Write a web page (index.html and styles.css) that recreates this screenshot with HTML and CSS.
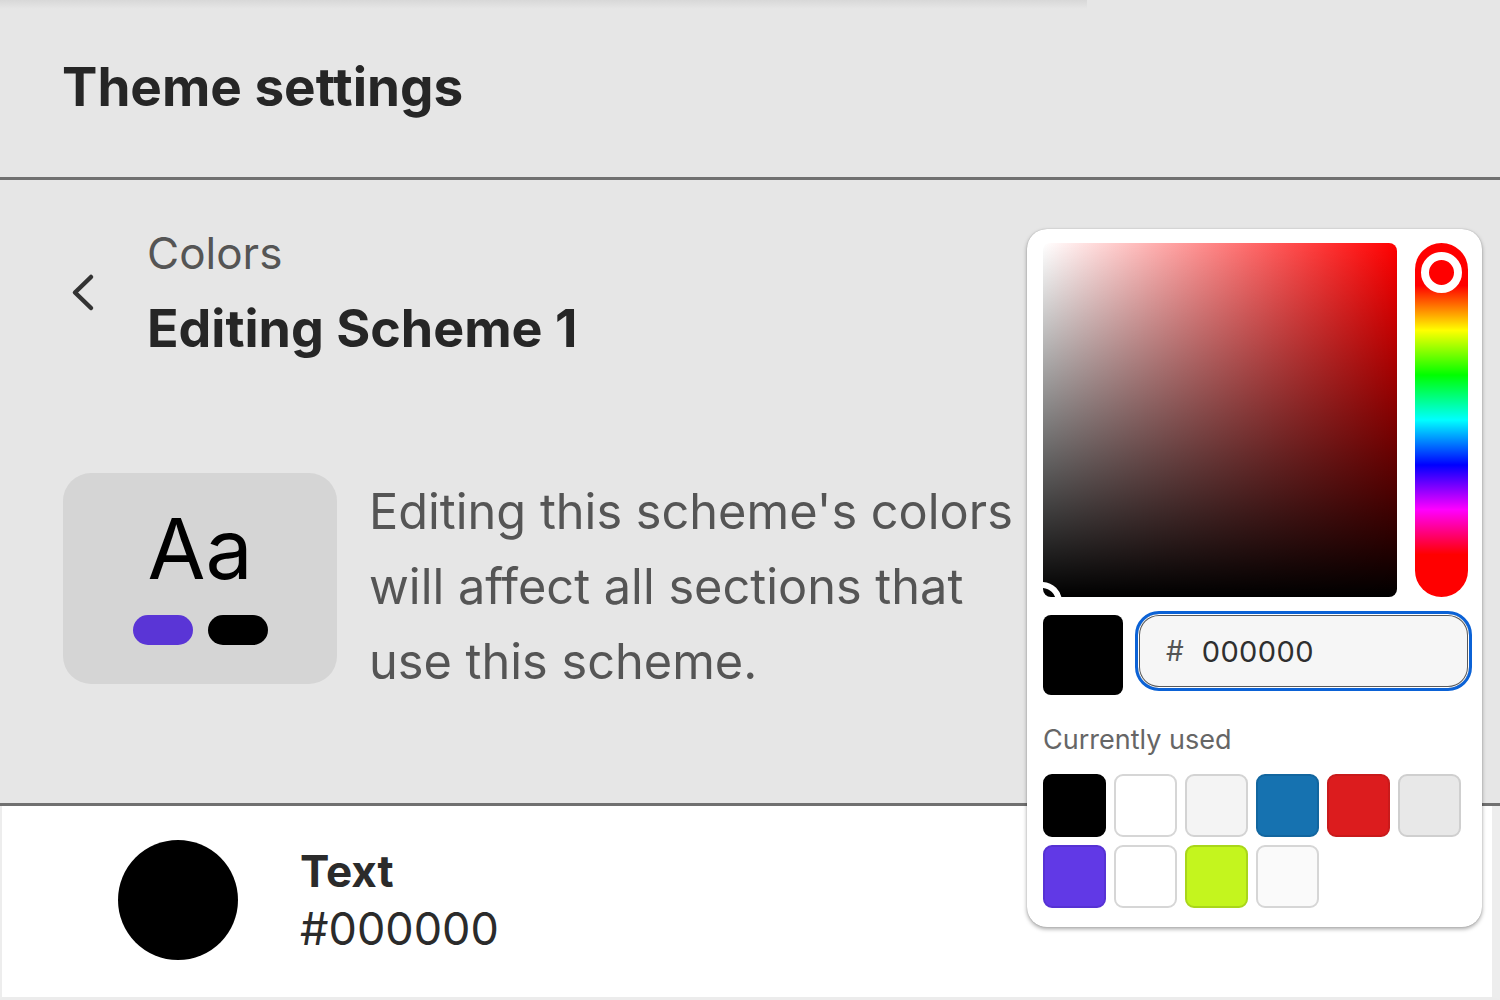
FILE: index.html
```html
<!DOCTYPE html>
<html lang="en">
<head>
<meta charset="utf-8">
<title>Theme settings</title>
<link rel="stylesheet" href="styles.css">
</head>
<body>
<div class="page">
  <div class="top-shade"></div>
  <header class="top">
    <h1 class="top-title">Theme settings</h1>
  </header>

  <section class="main">
    <div class="nav">
      <button class="back" aria-label="Back">
        <svg width="30" height="40" viewBox="0 0 30 40"><path d="M20 5 L4 20.5 L20 36" fill="none" stroke="#333" stroke-width="4.5" stroke-linecap="round" stroke-linejoin="round"/></svg>
      </button>
      <div class="nav-titles">
        <div class="nav-parent">Colors</div>
        <div class="nav-current">Editing Scheme 1</div>
      </div>
    </div>

    <div class="scheme">
      <div class="preview">
        <div class="preview-aa">Aa</div>
        <div class="preview-pills">
          <span class="pill pill-primary"></span>
          <span class="pill pill-secondary"></span>
        </div>
      </div>
      <p class="scheme-desc">Editing this scheme's colors will affect all sections that use this scheme.</p>
    </div>
  </section>

  <section class="color-row">
    <span class="color-dot"></span>
    <div class="color-info">
      <div class="color-name">Text</div>
      <div class="color-value">#000000</div>
    </div>
  </section>

  <div class="picker">
    <div class="picker-top">
      <div class="sv">
        <span class="sv-knob"></span>
      </div>
      <div class="hue">
        <span class="hue-knob"></span>
      </div>
    </div>
    <div class="picker-mid">
      <span class="current-swatch"></span>
      <label class="hex-field">
        <span class="hex-hash">#</span>
        <span class="hex-value">000000</span>
      </label>
    </div>
    <div class="used-label">Currently used</div>
    <div class="swatches">
      <span class="sw sw-black"></span>
      <span class="sw sw-white"></span>
      <span class="sw sw-light"></span>
      <span class="sw sw-blue"></span>
      <span class="sw sw-red"></span>
      <span class="sw sw-gray"></span>
      <span class="sw sw-purple"></span>
      <span class="sw sw-white"></span>
      <span class="sw sw-lime"></span>
      <span class="sw sw-offwhite"></span>
    </div>
  </div>
</div>
</body>
</html>
```

FILE: styles.css
```css
* { box-sizing: border-box; }
html, body { margin: 0; padding: 0; }
body {
  width: 1500px;
  height: 1000px;
  overflow: hidden;
  background: #e6e6e6;
  font-family: Inter, "Noto Sans", "Liberation Sans", sans-serif;
  color: #262626;
}
.page {
  position: relative;
  width: 1500px;
  height: 1000px;
  display: flex;
  flex-direction: column;
}
.top-shade {
  position: absolute;
  left: 0;
  top: 0;
  width: 1087px;
  height: 9px;
  background: linear-gradient(to bottom, #d8d8d8, #e6e6e6);
}
.top {
  height: 180px;
  border-bottom: 3px solid #707070;
  display: flex;
  align-items: center;
  padding-left: 62px;
}
.top-title {
  margin: 0;
  font-size: 53px;
  font-weight: 700;
  line-height: 1.2;
  color: #262626;
  padding-bottom: 1px;
}
.main {
  height: 626px;
  border-bottom: 3px solid #707070;
  padding: 42px 0 0 0;
}
.nav {
  display: flex;
  align-items: center;
}
.back {
  border: 0;
  background: none;
  padding: 0;
  margin: 0 0 6px 71px;
  width: 76px;
  height: 40px;
  display: flex;
  align-items: center;
  justify-content: flex-start;
}
.nav-titles {
  display: flex;
  flex-direction: column;
}
.nav-parent {
  font-size: 44px;
  line-height: 62px;
  color: #555;
}
.nav-current {
  margin-top: 7px;
  font-size: 52px;
  line-height: 76px;
  font-weight: 700;
  color: #262626;
}
.scheme {
  display: flex;
  align-items: flex-start;
  margin-top: 106px;
  padding-left: 63px;
}
.preview {
  flex-shrink: 0;
  width: 274px;
  height: 211px;
  border-radius: 28px;
  background: #d5d5d5;
  display: flex;
  flex-direction: column;
  align-items: center;
  padding-top: 26px;
}
.preview-aa {
  font-size: 84px;
  line-height: 100px;
  color: #000;
}
.preview-pills {
  display: flex;
  gap: 15px;
  margin-top: 16px;
}
.pill {
  width: 60px;
  height: 30px;
  border-radius: 15px;
  display: block;
}
.pill-primary { background: #5a35d6; }
.pill-secondary { background: #000; }
.scheme-desc {
  margin: 1px 0 0 32px;
  width: 652px;
  font-size: 48.7px;
  line-height: 75px;
  color: #555;
}
.color-row {
  flex: 1;
  background: #fff;
  border-left: 2px solid #ededed;
  border-right: 8px solid #ededed;
  border-bottom: 3px solid #ececec;
  display: flex;
  align-items: center;
  padding-left: 116px;
  padding-bottom: 4px;
}
.color-dot {
  width: 120px;
  height: 120px;
  border-radius: 50%;
  background: #000;
  display: block;
  flex-shrink: 0;
}
.color-info {
  margin-left: 62px;
  display: flex;
  flex-direction: column;
}
.color-name {
  font-size: 44px;
  font-weight: 700;
  line-height: 58px;
  color: #2b2b2b;
}
.color-value {
  font-size: 45px;
  line-height: 58px;
  color: #2b2b2b;
}
.picker {
  position: absolute;
  left: 1027px;
  top: 229px;
  width: 455px;
  height: 698px;
  background: #fff;
  border-radius: 20px;
  box-shadow: 0 2px 4px rgba(0,0,0,0.35), 0 0 1px rgba(0,0,0,0.3);
  padding: 14px 10px 0 16px;
}
.picker-top {
  display: flex;
  gap: 18px;
}
.sv {
  position: relative;
  flex-shrink: 0;
  width: 354px;
  height: 354px;
  border-radius: 8px;
  overflow: hidden;
  background:
    linear-gradient(to top, #000, rgba(0,0,0,0)),
    linear-gradient(to right, #fff, #ff0000);
}
.sv-knob {
  position: absolute;
  left: -21px;
  bottom: -25px;
  width: 40px;
  height: 40px;
  border-radius: 50%;
  border: 6px solid #fff;
  background: transparent;
}
.hue {
  position: relative;
  flex-shrink: 0;
  width: 53px;
  height: 354px;
  border-radius: 27px;
  background: linear-gradient(to bottom,
    #ff0000 0%, #ff0000 12%,
    #ffff00 24.7%, #00ff00 37.3%, #00ffff 50%,
    #0000ff 62.7%, #ff00ff 75.3%, #ff0000 88%, #ff0000 100%);
}
.hue-knob {
  position: absolute;
  left: 6px;
  top: 9px;
  width: 41px;
  height: 41px;
  border-radius: 50%;
  border: 8px solid #fff;
  background: #ff0000;
}
.picker-mid {
  display: flex;
  align-items: flex-start;
  margin-top: 14px;
  gap: 12px;
}
.current-swatch {
  flex-shrink: 0;
  width: 80px;
  height: 80px;
  margin-top: 4px;
  border-radius: 8px;
  background: #000;
  display: block;
}
.hex-field {
  flex-shrink: 0;
  width: 337px;
  height: 80px;
  border: 3px solid #0b62d6;
  border-radius: 24px;
  display: flex;
  align-items: center;
  background: #fff;
  box-shadow: inset 0 0 0 1px #fff, inset 0 0 0 2px #5a5a5a, inset 0 0 0 60px #f6f6f6;
  padding-left: 28px;
}
.hex-hash {
  font-size: 28px;
  color: #555;
  margin-right: 18px;
}
.hex-value {
  font-size: 29px;
  color: #2f2f2f;
  letter-spacing: 0.4px;
}
.used-label {
  margin-top: 28px;
  font-size: 27px;
  line-height: 34px;
  color: #666;
}
.swatches {
  margin-top: 17px;
  display: grid;
  grid-template-columns: repeat(6, 63px);
  grid-auto-rows: 63px;
  gap: 8px;
}
.sw {
  display: block;
  border-radius: 9px;
  border: 2px solid rgba(0,0,0,0.08);
}
.sw-black { background: #000; border-color: #000; }
.sw-white { background: #fff; border-color: #d6d6d6; }
.sw-light { background: #f4f4f4; border-color: #d3d3d3; }
.sw-blue { background: #1672b0; border-color: #12669f; }
.sw-red { background: #dc1c1e; border-color: #c91a1b; }
.sw-gray { background: #e8e8e8; border-color: #cfcfcf; }
.sw-purple { background: #6139e6; border-color: #5632d4; }
.sw-lime { background: #c4f51e; border-color: #a9d61a; }
.sw-offwhite { background: #fafafa; border-color: #d6d6d6; }
```
